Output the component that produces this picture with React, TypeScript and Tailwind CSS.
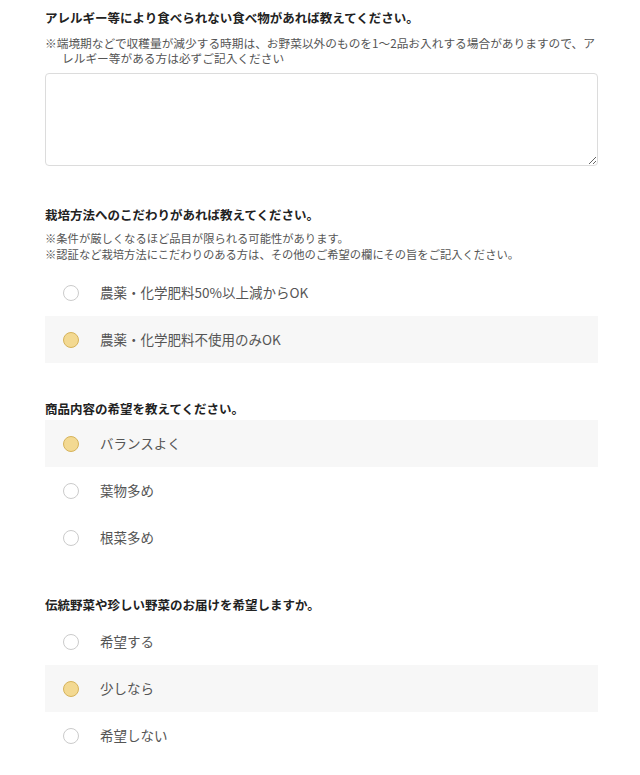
import React from 'react';

type Option = { label: string; checked?: boolean };

const Radio = ({ checked }: { checked?: boolean }) => (
  <span
    className={
      checked
        ? 'w-[16px] h-[16px] rounded-full border-[1.5px] border-[#d6b35b] bg-[#f3d992] shrink-0'
        : 'w-[16px] h-[16px] rounded-full border-[1.5px] border-[#cbcbcb] bg-white shrink-0'
    }
  />
);

const Options = ({ items, className }: { items: Option[]; className?: string }) => (
  <div className={className}>
    {items.map((o) => (
      <label
        key={o.label}
        className={
          'flex items-center h-[47px] pl-[18px] ' + (o.checked ? 'bg-[#f7f7f7]' : 'bg-white')
        }
      >
        <Radio checked={o.checked} />
        <span className="ml-[21px] text-[13.5px] text-[#555]">{o.label}</span>
      </label>
    ))}
  </div>
);

const Title = ({ children }: { children: React.ReactNode }) => (
  <h2 className="text-[12.5px] leading-[16px] font-bold text-[#222] whitespace-nowrap">{children}</h2>
);

export default function App() {
  return (
    <div className="min-h-[775px] bg-white pl-[45px] pr-[42px] pt-[10px] font-['Noto_Sans_CJK_JP','Noto_Sans',sans-serif]">
      {/* アレルギー */}
      <section>
        <Title>アレルギー等により食べられない食べ物があれば教えてください。</Title>
        <div className="mt-[9px] text-[11.7px] leading-[15px] text-[#555] whitespace-nowrap">
          <p>※端境期などで収穫量が減少する時期は、お野菜以外のものを1〜2品お入れする場合がありますので、ア</p>
          <p className="pl-[17px]">レルギー等がある方は必ずご記入ください</p>
        </div>
        <textarea className="mt-[8px] block w-full h-[93px] rounded-[4px] border border-[#dcdcdc] bg-white resize-y outline-none" />
      </section>

      {/* 栽培方法 */}
      <section className="mt-[41px]">
        <Title>栽培方法へのこだわりがあれば教えてください。</Title>
        <div className="mt-[7px] text-[11.3px] leading-[16px] text-[#555] whitespace-nowrap">
          <p>※条件が厳しくなるほど品目が限られる可能性があります。</p>
          <p>※認証など栽培方法にこだわりのある方は、その他のご希望の欄にその旨をご記入ください。</p>
        </div>
        <Options
          className="mt-[7px]"
          items={[{ label: '農薬・化学肥料50%以上減からOK' }, { label: '農薬・化学肥料不使用のみOK', checked: true }]}
        />
      </section>

      {/* 商品内容 */}
      <section className="mt-[38px]">
        <Title>商品内容の希望を教えてください。</Title>
        <Options
          className="mt-[3px]"
          items={[{ label: 'バランスよく', checked: true }, { label: '葉物多め' }, { label: '根菜多め' }]}
        />
      </section>

      {/* 伝統野菜 */}
      <section className="mt-[36px]">
        <Title>伝統野菜や珍しい野菜のお届けを希望しますか。</Title>
        <Options
          className="mt-[5px]"
          items={[{ label: '希望する' }, { label: '少しなら', checked: true }, { label: '希望しない' }]}
        />
      </section>
    </div>
  );
}
